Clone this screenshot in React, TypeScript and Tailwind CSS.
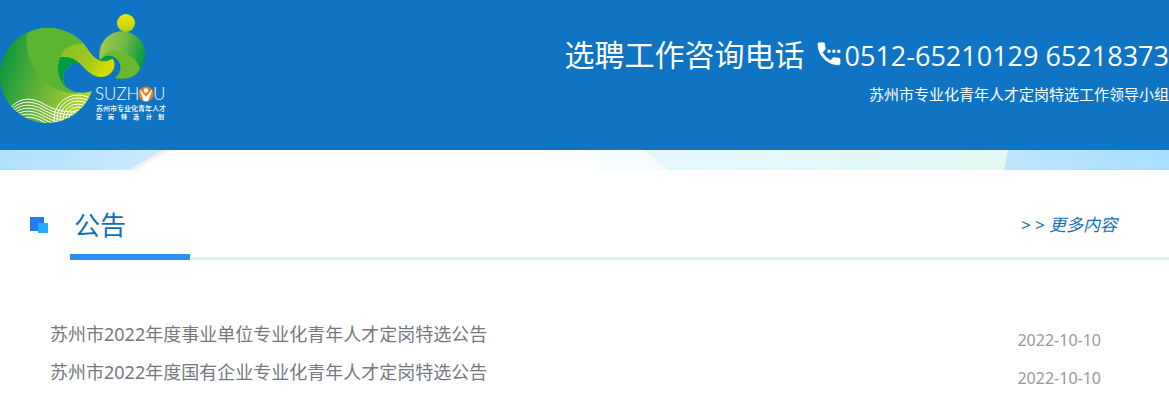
interface Notice {
  id: number;
  title: string;
  date: string;
}

const notices: Notice[] = [
  { id: 1, title: "苏州市2022年度事业单位专业化青年人才定岗特选公告", date: "2022-10-10" },
  { id: 2, title: "苏州市2022年度国有企业专业化青年人才定岗特选公告", date: "2022-10-10" },
];

// Ripples at the bottom of the logo
const leftWaves = [0, 3, 6, 9, 12, 15, 18];
const rightWaves = [24, 21, 18, 15, 12, 9, 6];

function Logo() {
  return (
    <svg width="170" height="130" viewBox="0 0 170 130" role="img" aria-label="SUZHOU">
      <defs>
        <linearGradient id="body" x1="0" y1="0.5" x2="1" y2="0.8">
          <stop offset="0" stopColor="#109a3d" />
          <stop offset="0.4" stopColor="#5fb038" />
          <stop offset="1" stopColor="#c0d830" />
        </linearGradient>
        <linearGradient id="swirl" x1="0" y1="0" x2="1" y2="0.4">
          <stop offset="0" stopColor="#84bd2b" />
          <stop offset="0.6" stopColor="#a0c820" />
          <stop offset="1" stopColor="#d3dc00" />
        </linearGradient>
        <linearGradient id="ball" x1="0" y1="0.2" x2="1" y2="0.5">
          <stop offset="0" stopColor="#a3cb4a" />
          <stop offset="0.5" stopColor="#74b847" />
          <stop offset="1" stopColor="#049a3e" />
        </linearGradient>
        <linearGradient id="sun" x1="0" y1="0" x2="0" y2="1">
          <stop offset="0" stopColor="#f0e800" />
          <stop offset="1" stopColor="#b4cd12" />
        </linearGradient>
        <clipPath id="bodyClip">
          <path d="M48 28A47.500 47.500 0 1 0 92 91L70 88L84 44Z" />
        </clipPath>
      </defs>

      <path d="M48 28A47.500 47.500 0 1 0 92 91C83 94 74 93 68 89C60 82 62 68 73 64L84 44C75 34 62 28 48 28Z" fill="url(#body)" />
      <path d="M27 34C34 29 41 28 48 28C62 28 75 34 84 44C72 46 63 50 60 57C56 68 58 82 68 89C74 93 80 93 88 92C68 96 52 90 41 78C30 66 25 50 27 34Z" fill="#5cb531" />
      <path d="M60 57C56 68 58 82 68 89C60 82 62 68 73 64C78 63 82 64 86 68L78 56Z" fill="#009b3e" />
      <path d="M60 57C63 48 73 43 84 44C90 52 95 61 103 61C107 61 110 60 112 58C116 62 115 69 111 73C106 78 99 78 93 75C82 69 78 55 60 57Z" fill="url(#swirl)" />
      <path d="M100 60A23 23 0 1 1 140 69C136 77 127 80 115 78C123 73 123 60 112 56C107 54 104 57 100 60Z" fill="url(#ball)" />
      <path d="M101 59C106 49 118 49 127 54C135 58 138 63 140 69C136 77 127 80 115 78C123 73 123 60 112 56C108 55 105 57 101 59Z" fill="#6bb82f" />
      <path d="M100 61C103 56 109 54 113 58C110 60 106 62 100 61Z" fill="#009b3e" />
      <circle cx="126" cy="23" r="9" fill="url(#sun)" />

      <g clipPath="url(#bodyClip)" fill="none" stroke="#fff" strokeWidth="1">
        {leftWaves.map((y) => (
          <path key={y} transform={`translate(0 ${y})`} d="M8 111C18 97 30 97 42 103C51 108 58 112 76 112" />
        ))}
        {rightWaves.map((r) => (
          <circle key={r} cx="78" cy="119" r={r} />
        ))}
      </g>

      <text x="95" y="100" fontSize="17" fontFamily="Lato, sans-serif" fontWeight="300" fill="#fff">SUZH</text>
      <circle cx="146" cy="94" r="7.500" fill="#ee7b1a" />
      <path d="M140 90L146 97L152 90L148 101H144Z" fill="#fff" stroke="#fff" strokeWidth="0.500" />
      <circle cx="146" cy="90.500" r="2.200" fill="#fff" />
      <text x="153" y="100" fontSize="17" fontFamily="Lato, sans-serif" fontWeight="300" fill="#fff">U</text>
      <text x="96" y="111" fontSize="7" fontFamily="Noto Sans CJK SC, sans-serif" fontWeight="500" fill="#fff">苏州市专业化青年人才</text>
      <text x="96 108 121 133 146 158" y="119" fontSize="6" fontFamily="Noto Sans CJK SC, sans-serif" fontWeight="700" fill="#fff">定岗特选计划</text>
    </svg>
  );
}

export default function App() {
  return (
    <div className="bg-white font-['Noto_Sans','Noto_Sans_CJK_SC',sans-serif]">
      <header className="flex h-[150px] justify-between bg-[#0e74c3] text-white">
        <Logo />
        <div className="flex flex-col items-end pt-8">
          <div className="flex items-center whitespace-nowrap">
            <span className="text-[30px] leading-11">选聘工作咨询电话</span>
            <svg className="ml-2 size-8" viewBox="0 0 24 26" fill="currentColor">
              <path d="M20 15.500c-1.250 0-2.450-.2-3.570-.570-.35-.11-.74-.03-1.020.240l-2.200 2.200c-2.830-1.440-5.150-3.750-6.590-6.580l2.200-2.210c.28-.27.36-.66.25-1.010C8.700 6.450 8.500 5.250 8.500 4c0-.55-.45-1-1-1H4c-.55 0-1 .45-1 1 0 9.390 7.610 17 17 17 .55 0 1-.45 1-1v-3.500c0-.55-.45-1-1-1zM19 9h2v2h-2zM15 9h2v2h-2zM11 9h2v2h-2z" stroke="currentColor" strokeWidth="0.500" />
            </svg>
            <span className="pt-0.5 font-['Open_Sans',sans-serif] text-[27px] leading-11">0512-65210129 65218373</span>
          </div>
          <p className="text-[15px] leading-8">苏州市专业化青年人才定岗特选工作领导小组</p>
        </div>
      </header>

      {/* Bottom edge of the banner */}
      <svg className="block h-5 w-full" viewBox="0 0 1169 20" preserveAspectRatio="none">
        <defs>
          <linearGradient id="skyLeft">
            <stop offset="0" stopColor="#b0e1fe" />
            <stop offset="1" stopColor="#cbeafd" />
          </linearGradient>
          <linearGradient id="skyMid">
            <stop offset="0" stopColor="#fefefe" />
            <stop offset="1" stopColor="#f3fbfe" />
          </linearGradient>
          <linearGradient id="skyPale">
            <stop offset="0" stopColor="#e6f7fe" />
            <stop offset="0.6" stopColor="#e1f8fa" />
            <stop offset="1" stopColor="#e4f7f0" />
          </linearGradient>
          <linearGradient id="skyRight">
            <stop offset="0" stopColor="#bfe5fe" />
            <stop offset="1" stopColor="#a8dffe" />
          </linearGradient>
        </defs>
        <rect width="1169" height="20" fill="#fefefe" />
        <path d="M0 0H170L136 20H0Z" fill="#f2f2f2" />
        <path d="M0 0H163L129 20H0Z" fill="url(#skyLeft)" />
        <path d="M540 0H700V20H540Z" fill="url(#skyMid)" />
        <path d="M643 0H1008L1004 20H669Z" fill="url(#skyPale)" />
        <path d="M1008 0H1169V20H1004Z" fill="url(#skyRight)" />
      </svg>

      <main>
        <div className="flex h-[84px] items-center pt-[26px] pr-[52px] pl-[30px]">
          <svg width="18" height="16" viewBox="0 0 18 16">
            <path d="M0 0H14V14H0Z" fill="#237cf0" />
            <path d="M8 6H18V16H8Z" fill="#25acff" />
          </svg>
          <h2 className="ml-[26px] text-[26px] leading-10 text-[#0e6fb8]">公告</h2>
          <a href="#more" className="ml-auto text-[17px] text-[#0e6fb8] italic">&gt; &gt; 更多内容</a>
        </div>
        <div className="ml-[70px] flex items-end">
          <div className="h-1.5 w-[120px] bg-[#2b8df5]" />
          <div className="h-[3px] flex-1 bg-[#e6f1f8]" />
        </div>

        <ul className="pt-[55px] pr-[68px] pb-5 pl-[50px]">
          {notices.map((notice) => (
            <li key={notice.id} className="flex h-[38px] items-center justify-between">
              <a href={`#notice-${notice.id}`} className="text-lg text-[#73797f]">{notice.title}</a>
              <span className="pt-3 text-base text-[#999]">{notice.date}</span>
            </li>
          ))}
        </ul>
      </main>
    </div>
  );
}
